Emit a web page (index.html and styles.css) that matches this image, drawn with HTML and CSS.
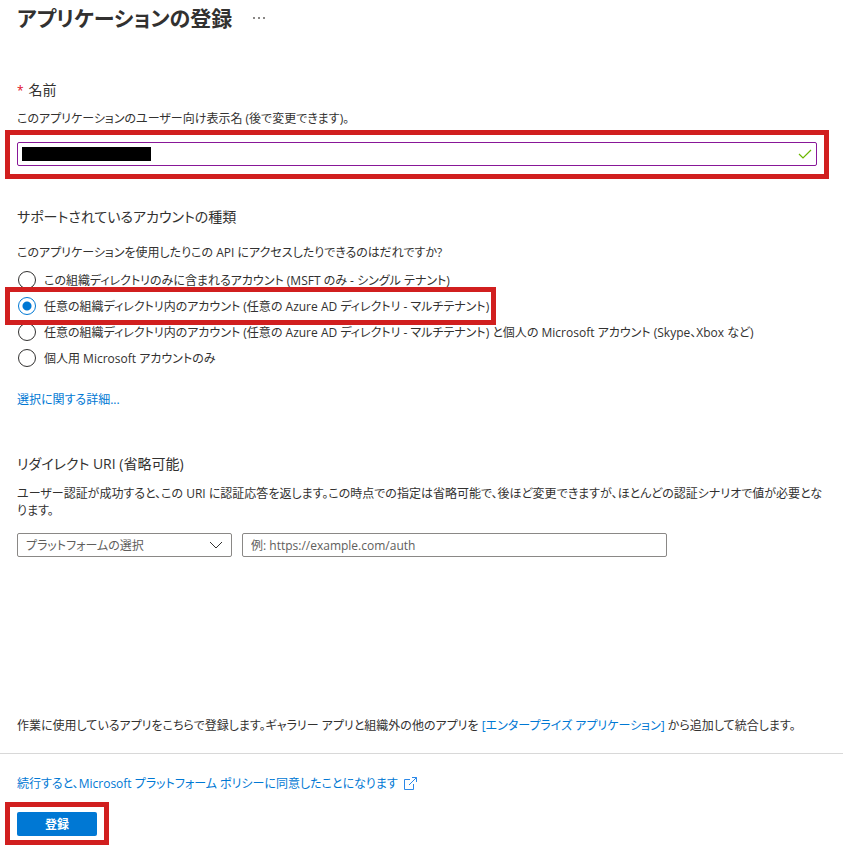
FILE: index.html
```html
<!DOCTYPE html>
<html lang="ja">
<head>
<meta charset="utf-8">
<meta name="viewport" content="width=device-width, initial-scale=1">
<title>アプリケーションの登録</title>
<link rel="stylesheet" href="styles.css">
</head>
<body>
<form class="page">
  <header class="title-bar">
    <h1 class="title">アプリケーションの登録</h1>
    <button class="more" type="button">
      <svg width="12" height="2" viewBox="0 0 12 2" fill="#8a8886"><rect x="0" width="2" height="2"/><rect x="5" width="2" height="2"/><rect x="10" width="2" height="2"/></svg>
    </button>
  </header>

  <main class="content">
    <section class="section">
      <label class="heading" for="name"><span class="required">*</span>名前</label>
      <p class="text name-hint">このアプリケーションのユーザー向け表示名 (後で変更できます)。</p>
      <div class="name-field callout callout-field">
        <input class="box name-input" id="name" type="text">
        <span class="redaction"></span>
        <svg class="check" width="14" height="10" viewBox="0 0 14 10" fill="none" stroke="#6bb700" stroke-width="1.2"><path d="M1 5l4 4 8-8"/></svg>
      </div>
    </section>

    <section class="section accounts">
      <h2 class="heading">サポートされているアカウントの種類</h2>
      <p class="text question">このアプリケーションを使用したりこの API にアクセスしたりできるのはだれですか?</p>
      <div class="options">
        <label class="option"><input class="radio" type="radio" name="account">この組織ディレクトリのみに含まれるアカウント (MSFT のみ - シングル テナント)</label>
        <label class="option callout callout-option"><input class="radio" type="radio" name="account" checked>任意の組織ディレクトリ内のアカウント (任意の Azure AD ディレクトリ - マルチテナント)</label>
        <label class="option"><input class="radio" type="radio" name="account">任意の組織ディレクトリ内のアカウント (任意の Azure AD ディレクトリ - マルチテナント) と個人の Microsoft アカウント (Skype、Xbox など)</label>
        <label class="option"><input class="radio" type="radio" name="account">個人用 Microsoft アカウントのみ</label>
      </div>
      <a class="text link details" href="#">選択に関する詳細...</a>
    </section>

    <section class="section redirect">
      <h2 class="heading">リダイレクト URI (省略可能)</h2>
      <p class="text redirect-hint">ユーザー認証が成功すると、この URI に認証応答を返します。この時点での指定は省略可能で、後ほど変更できますが、ほとんどの認証シナリオで値が必要となります。</p>
      <div class="fields">
        <div class="platform">
          <select class="box platform-select" aria-label="プラットフォームの選択"><option>プラットフォームの選択</option></select>
          <svg class="chevron" width="14" height="8" viewBox="0 0 14 8" fill="none" stroke="#323130"><path d="M1 1l6 6 6-6"/></svg>
        </div>
        <input class="box uri-input" type="text" aria-label="リダイレクト URI" placeholder="例: https://example.com/auth">
      </div>
    </section>

    <p class="text note">作業に使用しているアプリをこちらで登録します。ギャラリー アプリと組織外の他のアプリを <a class="link" href="#">[エンタープライズ アプリケーション]</a> から追加して統合します。</p>
  </main>

  <footer class="footer">
    <a class="text link policy" href="#">続行すると、Microsoft プラットフォーム ポリシーに同意したことになります
      <svg width="13" height="13" viewBox="0 0 13 13" fill="none" stroke="#2b88e8"><path d="M6 2.500H.5v10h9V7M8 .5h4.500V5M12.500.5L5 8"/></svg>
    </a>
    <div class="callout callout-submit">
      <button class="submit" type="submit">登録</button>
    </div>
  </footer>
</form>
</body>
</html>
```

FILE: styles.css
```css
* {
  box-sizing: border-box;
}

body {
  margin: 0;
  background: #fff;
  color: #323130;
  font-family: "Open Sans", "Noto Sans CJK JP", sans-serif;
  font-size: 12px;
  font-feature-settings: "palt";
}

h1, h2, p {
  margin: 0;
}

input, select, button {
  font: inherit;
  font-feature-settings: inherit;
  margin: 0;
}

.title-bar {
  display: flex;
  align-items: center;
  gap: 21px;
  padding: 2px 17px 0;
}

.title {
  font-size: 21px;
  line-height: 32px;
  font-weight: 600;
}

.more {
  display: flex;
  padding: 0;
  border: 0;
  background: none;
}

.content {
  padding: 46px 26px 19px 17px;
}

.section {
  display: flex;
  flex-direction: column;
  align-items: stretch;
}

.heading {
  font-size: 14px;
  line-height: 20px;
  font-weight: 400;
}

.required {
  margin-right: 5px;
  color: #e00b1c;
  font-size: 12px;
  line-height: 1;
}

.text {
  line-height: 17px;
}

.link {
  color: #0078d4;
  text-decoration: none;
}

.name-hint {
  margin: 10px 0 15px;
}

.box {
  display: block;
  width: 100%;
  height: 24px;
  padding: 0 8px;
  border: 1px solid #8a8886;
  border-radius: 2px;
  background: #fff;
  color: #605e5c;
  outline: 0;
}

.box::placeholder {
  color: #605e5c;
  opacity: 1;
}

.name-input {
  border-color: #881798;
}

.redaction {
  position: absolute;
  left: 5px;
  top: 5px;
  width: 129px;
  height: 14px;
  background: #000;
}

.check {
  position: absolute;
  right: 5px;
  top: 7px;
}

/* Red frames that point out the steps to take */
.callout {
  position: relative;
}

.callout::after {
  content: "";
  position: absolute;
  inset: -12px -12px -13px;
  border: 5px solid #d11f1f;
  pointer-events: none;
}

.callout-option::after {
  inset: -6px -7px -6px -12px;
}

.callout-submit::after {
  inset: -10px -12px -9px;
}

.accounts {
  align-items: flex-start;
  margin-top: 41px;
}

.question {
  margin: 17px 0 6px;
}

.options {
  display: flex;
  flex-direction: column;
  align-items: flex-start;
}

.option {
  display: flex;
  align-items: center;
  gap: 8px;
  min-height: 26px;
}

.radio {
  flex: none;
  appearance: none;
  width: 18px;
  height: 18px;
  margin-left: 1px;
  border: 1px solid #323130;
  border-radius: 50%;
  background: #fff;
}

.radio:checked {
  border-color: #0078d4;
  background: radial-gradient(circle, #0078d4 4px, #fff 5px);
}

.details {
  margin-top: 20px;
}

.redirect {
  margin-top: 46px;
}

/* Runs a little past the column, so that the last line holds only the ending */
.redirect-hint {
  margin: 11px -8px 14px 0;
}

.fields {
  display: flex;
  gap: 10px;
}

.platform {
  position: relative;
  flex: 0 1 215px;
}

.platform-select {
  appearance: none;
}

.chevron {
  position: absolute;
  right: 9px;
  top: 8px;
  pointer-events: none;
}

.uri-input {
  flex: 0 1 425px;
}

.note {
  margin-top: 160px;
}

.footer {
  display: flex;
  flex-direction: column;
  align-items: flex-start;
  gap: 20px;
  padding: 21px 17px 13px;
  border-top: 1px solid #d8d8d8;
}

.policy {
  display: flex;
  align-items: center;
  gap: 6px;
}

.submit {
  display: block;
  width: 80px;
  height: 24px;
  padding: 0;
  border: 0;
  border-radius: 2px;
  background: #0078d4;
  color: #fff;
  font-weight: 600;
}
```
